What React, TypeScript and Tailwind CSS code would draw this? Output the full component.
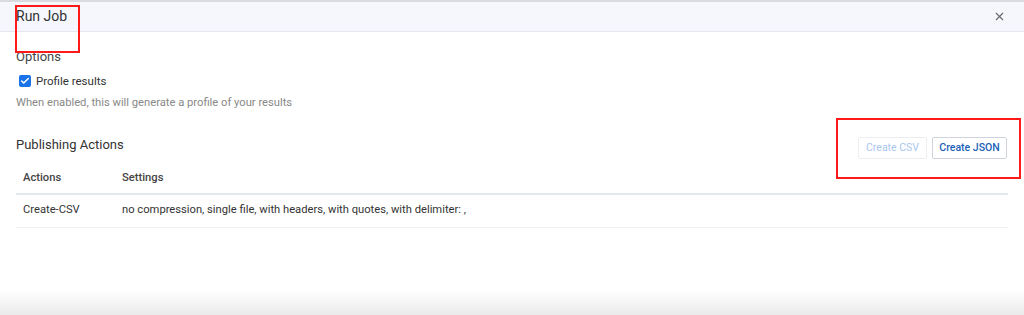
import React from "react";
import { X, Check } from "lucide-react";

export default function App() {
  return (
    <div className="relative w-[1024px] h-[315px] overflow-hidden bg-white text-[#333]" style={{ fontFamily: "Roboto, 'Liberation Sans', sans-serif" }}>
      {/* Header */}
      <div className="h-[32px] border-t-2 border-[#d9dbe0] border-b border-b-[#e3e7ef] bg-[#f5f7fc] flex items-center justify-between pl-4 pr-[18px]">
        <span className="text-[14px] text-[#333]">Run Job</span>
        <X className="w-[13px] h-[13px] text-[#666]" strokeWidth={2} />
      </div>

      {/* Body */}
      <div className="px-4">
        <div className="pt-[17px] text-[13px] leading-[16px] text-[#444]">Options</div>
        <label className="mt-[8px] ml-[3px] flex items-center gap-[5px]">
          <span className="w-[12px] h-[12px] rounded-[2px] bg-[#1a73e8] flex items-center justify-center">
            <Check className="w-[10px] h-[10px] text-white" strokeWidth={3.5} />
          </span>
          <span className="text-[11.5px] leading-[16px] text-[#333]">Profile results</span>
        </label>
        <p className="mt-[6px] text-[11.2px] leading-[16px] text-[#888]">When enabled, this will generate a profile of your results</p>

        <div className="mt-[26px] flex items-start justify-between pr-px">
          <span className="text-[13px] leading-[16px] text-[#333]">Publishing Actions</span>
          <div className="flex gap-[5px]">
            <button className="h-[22px] w-[69px] rounded-[2px] border border-[#eceef2] text-[10.5px] text-[#a9c6ef]">Create CSV</button>
            <button className="h-[22px] w-[75px] rounded-[2px] border border-[#cfd4dc] text-[10.5px] font-medium text-[#1c5fb8]">Create JSON</button>
          </div>
        </div>

        <table className="mt-[4px] w-[992px] text-left text-[11.2px]">
          <thead>
            <tr className="h-[31px] border-b-2 border-[#e3e7ee]">
              <th className="pl-[7px] w-[106px] font-medium text-[#444]">Actions</th>
              <th className="font-medium text-[#444]">Settings</th>
            </tr>
          </thead>
          <tbody>
            <tr className="h-[33px] border-b border-[#eeeff2]">
              <td className="pl-[7px] text-[#333]">Create-CSV</td>
              <td className="text-[#333]">no compression, single file, with headers, with quotes, with delimiter: ,</td>
            </tr>
          </tbody>
        </table>
      </div>

      {/* Bottom fade */}
      <div className="absolute left-0 right-0 bottom-0 h-[25px] bg-gradient-to-b from-white to-[#eaeaea]" />

      {/* Annotation boxes */}
      <div className="absolute left-[15px] top-[5px] w-[65px] h-[48px] border-2 border-[#ff1a1a]" />
      <div className="absolute left-[836px] top-[118px] w-[185px] h-[61px] border-2 border-[#ff1a1a]" />
    </div>
  );
}
